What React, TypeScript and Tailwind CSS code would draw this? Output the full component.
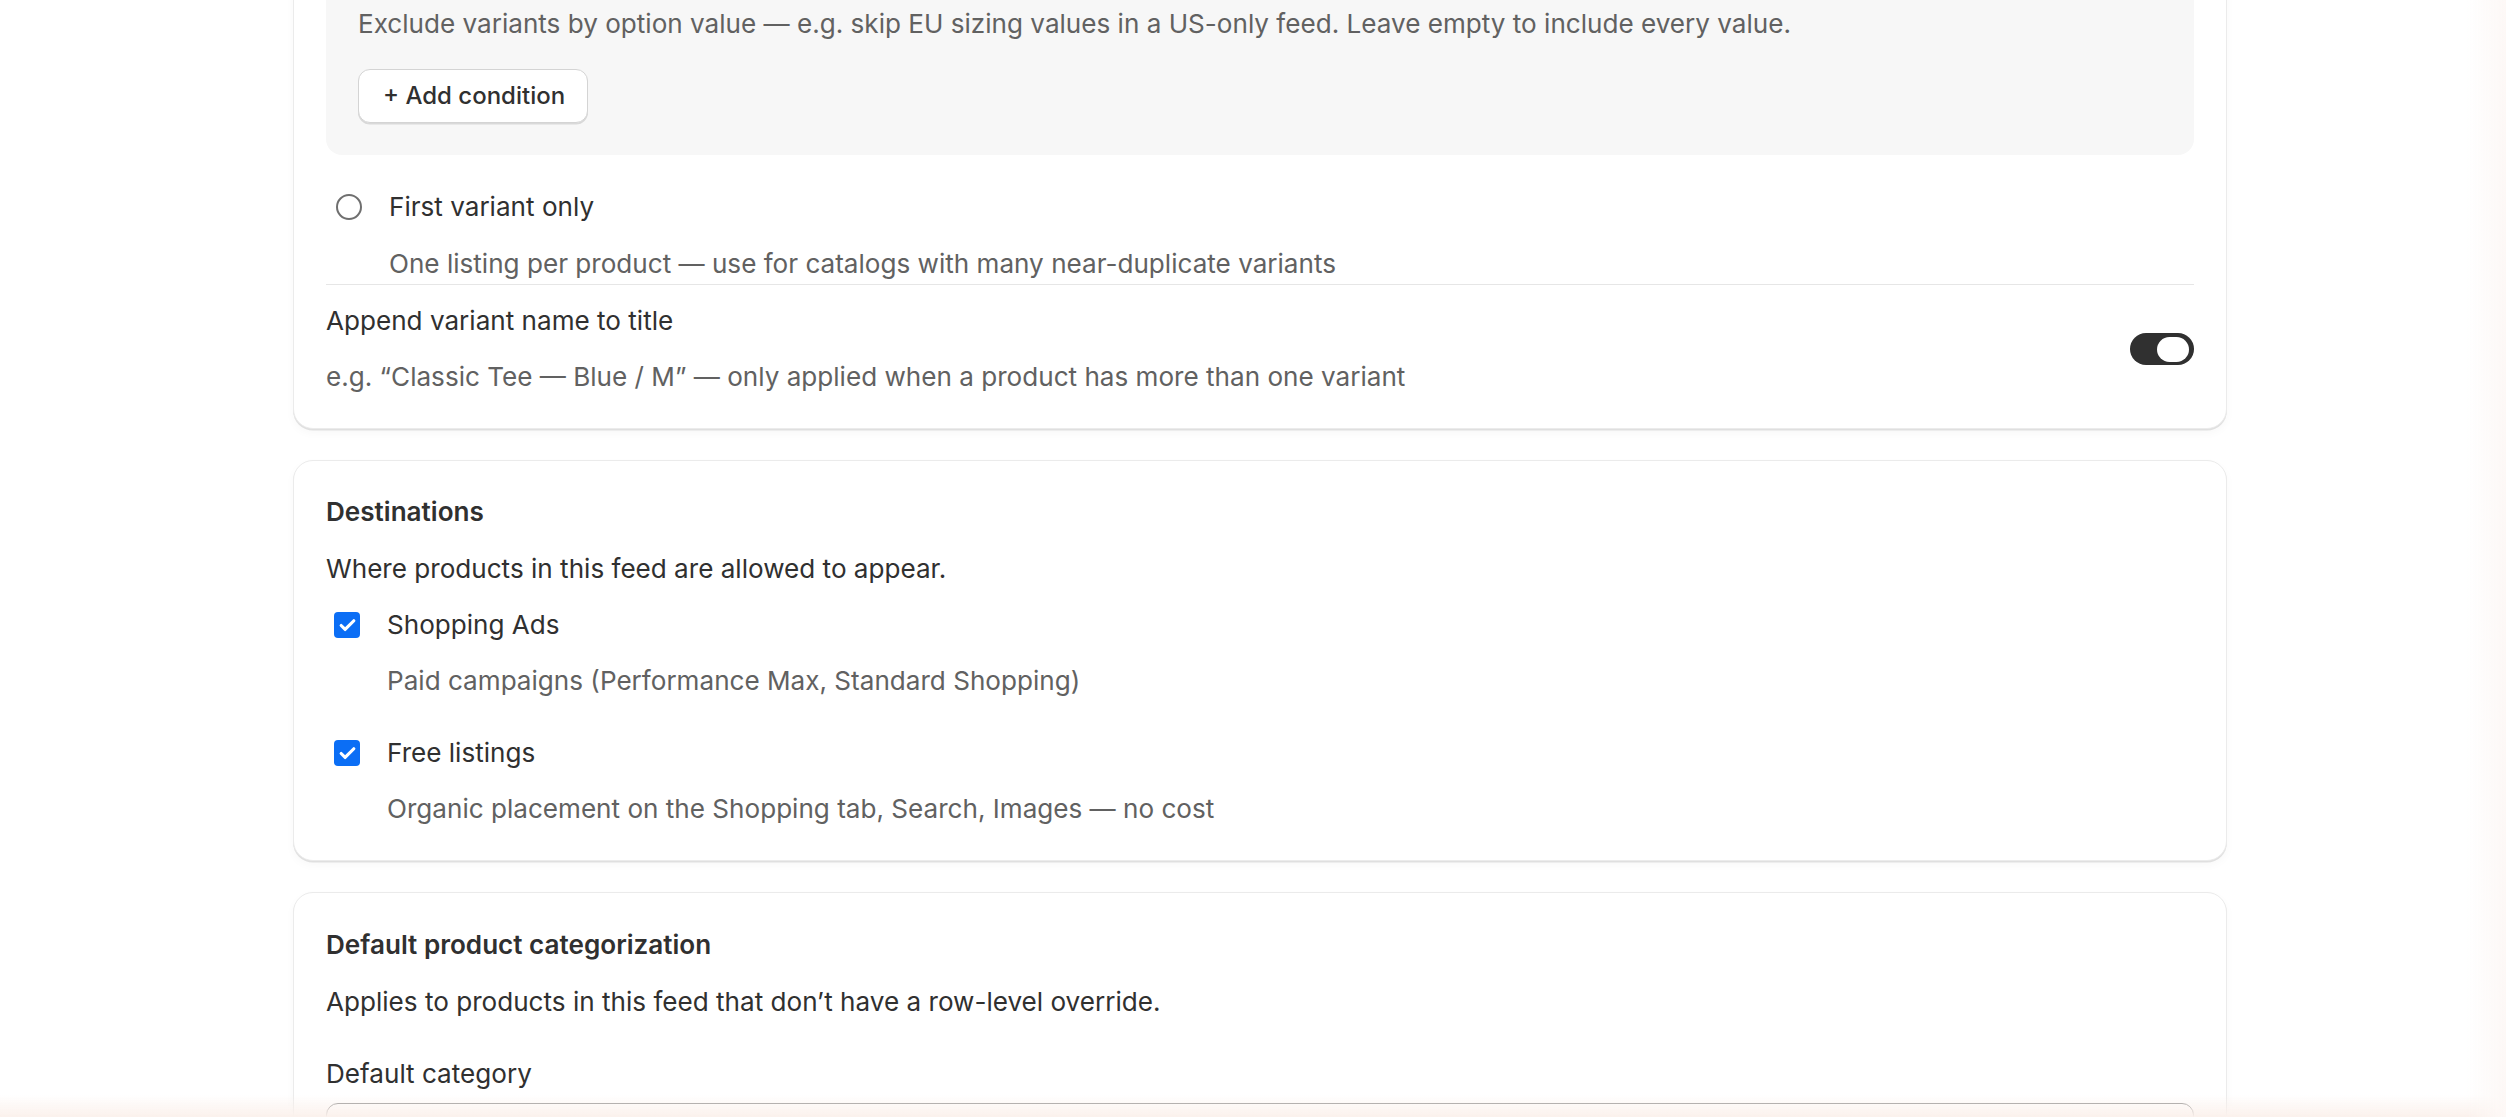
import { Check } from "lucide-react";

const font = { fontFamily: "Inter, 'Noto Sans', sans-serif" };

const Card = ({ children, className = "" }: { children: React.ReactNode; className?: string }) => (
  <section
    className={`rounded-[20px] border border-[#ebebeb] bg-white px-[32px] pt-[32px] pb-[32px] shadow-[0_1.5px_0_0_rgba(0,0,0,0.1),0_4px_10px_rgba(0,0,0,0.03)] ${className}`}
  >
    {children}
  </section>
);

const CheckOption = ({ label, hint, className = "" }: { label: string; hint: string; className?: string }) => (
  <div className={className}>
    <label className="flex h-[38px] items-center">
      <span className="ml-[8px] flex h-[26px] w-[26px] items-center justify-center rounded-[4px] bg-[#0b6ef5]">
        <Check size={19} strokeWidth={4} className="text-white" />
      </span>
      <span className="ml-[27px] text-[#303030]">{label}</span>
    </label>
    <p className="mt-[18px] pl-[61px] text-[#616161]">{hint}</p>
  </div>
);

export default function App() {
  return (
    <div className="relative min-h-screen overflow-hidden bg-white text-[26.1px] leading-[38px]" style={font}>
      <div className="-mt-[60px] w-[1934px] ml-[293px] flex flex-col gap-[31px]">
        <Card>
          <div className="rounded-[16px] bg-[#f7f7f7] px-[32px] pt-[32px] pb-[32px]">
            <p className="text-[#616161]">
              Exclude variants by option value — e.g. skip EU sizing values in a US-only feed. Leave empty to include every value.
            </p>
            <button className="mt-[26px] h-[54px] rounded-[12px] border-[1.5px] border-[#d4d4d4] bg-white pl-[24px] pr-[22px] text-[24px] font-medium text-[#303030] shadow-[0_1.5px_0_0_rgba(0,0,0,0.12)]">
              + Add condition
            </button>
          </div>
          <label className="mt-[33px] flex h-[38px] items-center">
            <span className="ml-[10px] h-[26px] w-[26px] rounded-full border-[2px] border-[#6f6f6f] bg-white" />
            <span className="ml-[27px] text-[#303030]">First variant only</span>
          </label>
          <p className="mt-[19px] pl-[63px] text-[#616161]">
            One listing per product — use for catalogs with many near-duplicate variants
          </p>
          <div className="mt-[1px] border-t border-[#e6e6e6]" />
          <div className="mt-[17px] flex items-center justify-between">
            <div>
              <p className="text-[#303030]">Append variant name to title</p>
              <p className="mt-[18px] text-[#616161]">
                e.g. “Classic Tee — Blue / M” — only applied when a product has more than one variant
              </p>
            </div>
            <button className="flex h-[32px] w-[64px] items-center justify-end rounded-full bg-[#303030] pr-[5px]">
              <span className="h-[25px] w-[32px] rounded-full bg-white" />
            </button>
          </div>
        </Card>

        <Card>
          <h2 className="font-semibold text-[#303030]">Destinations</h2>
          <p className="mt-[19px] text-[#303030]">Where products in this feed are allowed to appear.</p>
          <CheckOption
            className="mt-[18px]"
            label="Shopping Ads"
            hint="Paid campaigns (Performance Max, Standard Shopping)"
          />
          <CheckOption
            className="mt-[34px]"
            label="Free listings"
            hint="Organic placement on the Shopping tab, Search, Images — no cost"
          />
        </Card>

        <Card className="pt-[33px]">
          <h2 className="font-semibold text-[#303030]">Default product categorization</h2>
          <p className="mt-[19px] text-[#303030]">Applies to products in this feed that don’t have a row-level override.</p>
          <p className="mt-[34px] text-[#303030]">Default category</p>
          <div className="mt-[10px] h-[60px] rounded-[12px] border-[1.5px] border-[#8a8a8a] bg-white" />
        </Card>
      </div>

      <div className="pointer-events-none fixed inset-x-0 bottom-0 h-[22px] bg-gradient-to-t from-[#fbf1ec] to-transparent" />
      <div className="pointer-events-none fixed inset-y-0 right-0 w-[40px] bg-gradient-to-l from-[#fdf8f6] to-transparent" />
    </div>
  );
}
